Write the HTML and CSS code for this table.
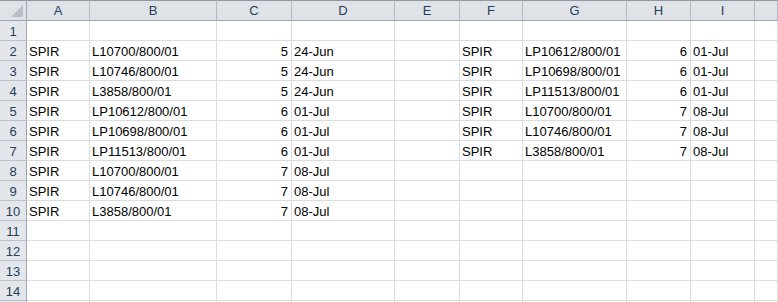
FILE: index.html
```html
<!DOCTYPE html>
<html>
<head>
<meta charset="utf-8">
<link rel="stylesheet" href="styles.css">
</head>
<body>
<div class="sheet">
  <div class="ch corner"><svg width="12" height="12" viewBox="0 0 12 12"><polygon points="12,0 12,12 0,12" fill="#b9bec5"/></svg></div>
  <div class="ch">A</div><div class="ch">B</div><div class="ch">C</div><div class="ch">D</div><div class="ch">E</div><div class="ch">F</div><div class="ch">G</div><div class="ch">H</div><div class="ch">I</div><div class="ch last"></div>

  <div class="rh">1</div><div class="c"></div><div class="c"></div><div class="c"></div><div class="c"></div><div class="c"></div><div class="c"></div><div class="c"></div><div class="c"></div><div class="c"></div><div class="c"></div>

  <div class="rh">2</div><div class="c">SPIR</div><div class="c">L10700/800/01</div><div class="c num">5</div><div class="c">24-Jun</div><div class="c"></div><div class="c">SPIR</div><div class="c">LP10612/800/01</div><div class="c num">6</div><div class="c">01-Jul</div><div class="c"></div>

  <div class="rh">3</div><div class="c">SPIR</div><div class="c">L10746/800/01</div><div class="c num">5</div><div class="c">24-Jun</div><div class="c"></div><div class="c">SPIR</div><div class="c">LP10698/800/01</div><div class="c num">6</div><div class="c">01-Jul</div><div class="c"></div>

  <div class="rh">4</div><div class="c">SPIR</div><div class="c">L3858/800/01</div><div class="c num">5</div><div class="c">24-Jun</div><div class="c"></div><div class="c">SPIR</div><div class="c">LP11513/800/01</div><div class="c num">6</div><div class="c">01-Jul</div><div class="c"></div>

  <div class="rh">5</div><div class="c">SPIR</div><div class="c">LP10612/800/01</div><div class="c num">6</div><div class="c">01-Jul</div><div class="c"></div><div class="c">SPIR</div><div class="c">L10700/800/01</div><div class="c num">7</div><div class="c">08-Jul</div><div class="c"></div>

  <div class="rh">6</div><div class="c">SPIR</div><div class="c">LP10698/800/01</div><div class="c num">6</div><div class="c">01-Jul</div><div class="c"></div><div class="c">SPIR</div><div class="c">L10746/800/01</div><div class="c num">7</div><div class="c">08-Jul</div><div class="c"></div>

  <div class="rh">7</div><div class="c">SPIR</div><div class="c">LP11513/800/01</div><div class="c num">6</div><div class="c">01-Jul</div><div class="c"></div><div class="c">SPIR</div><div class="c">L3858/800/01</div><div class="c num">7</div><div class="c">08-Jul</div><div class="c"></div>

  <div class="rh">8</div><div class="c">SPIR</div><div class="c">L10700/800/01</div><div class="c num">7</div><div class="c">08-Jul</div><div class="c"></div><div class="c"></div><div class="c"></div><div class="c"></div><div class="c"></div><div class="c"></div>

  <div class="rh">9</div><div class="c">SPIR</div><div class="c">L10746/800/01</div><div class="c num">7</div><div class="c">08-Jul</div><div class="c"></div><div class="c"></div><div class="c"></div><div class="c"></div><div class="c"></div><div class="c"></div>

  <div class="rh">10</div><div class="c">SPIR</div><div class="c">L3858/800/01</div><div class="c num">7</div><div class="c">08-Jul</div><div class="c"></div><div class="c"></div><div class="c"></div><div class="c"></div><div class="c"></div><div class="c"></div>

  <div class="rh">11</div><div class="c"></div><div class="c"></div><div class="c"></div><div class="c"></div><div class="c"></div><div class="c"></div><div class="c"></div><div class="c"></div><div class="c"></div><div class="c"></div>
  <div class="rh">12</div><div class="c"></div><div class="c"></div><div class="c"></div><div class="c"></div><div class="c"></div><div class="c"></div><div class="c"></div><div class="c"></div><div class="c"></div><div class="c"></div>
  <div class="rh">13</div><div class="c"></div><div class="c"></div><div class="c"></div><div class="c"></div><div class="c"></div><div class="c"></div><div class="c"></div><div class="c"></div><div class="c"></div><div class="c"></div>
  <div class="rh">14</div><div class="c"></div><div class="c"></div><div class="c"></div><div class="c"></div><div class="c"></div><div class="c"></div><div class="c"></div><div class="c"></div><div class="c"></div><div class="c"></div>
  <div class="rh"></div><div class="c"></div><div class="c"></div><div class="c"></div><div class="c"></div><div class="c"></div><div class="c"></div><div class="c"></div><div class="c"></div><div class="c"></div><div class="c"></div>
</div>
</body>
</html>
```

FILE: styles.css
```css
* { box-sizing: border-box; }
html, body {
  margin: 0;
  padding: 0;
  background: #ffffff;
  overflow: hidden;
}
body {
  width: 778px;
  height: 302px;
  font-family: "Liberation Sans", Arial, sans-serif;
  font-size: 13px;
  color: #000;
}
.sheet {
  display: grid;
  grid-template-columns: 27px 63px 127px 75px 103px 65px 63px 104px 64px 64px 1fr;
  grid-auto-rows: 20px;
  grid-template-rows: 21px;
  height: 302px;
  overflow: hidden;
}
.ch {
  background: #dfe3e8;
  border-top: 1px solid #8f98a3;
  border-bottom: 1px solid #9ea6b0;
  border-right: 1px solid #b3b9c1;
  color: #253e5c;
  text-align: center;
  line-height: 18px;
  padding-top: 1px;
  white-space: nowrap;
}
.ch.corner {
  display: flex;
  justify-content: flex-end;
  align-items: flex-end;
  padding: 0 3px 3px 0;
  border-right-color: #9ea6b0;
}
.ch.corner svg { display: block; }
.rh {
  background: #e3e6eb;
  border-right: 1px solid #9ea6b0;
  border-bottom: 1px solid #bcc2ca;
  color: #253e5c;
  text-align: center;
  line-height: 19px;
  padding-top: 1px;
  white-space: nowrap;
}
.c {
  border-right: 1px solid #dadcdd;
  border-bottom: 1px solid #dadcdd;
  line-height: 19px;
  padding: 1px 2px 0 2px;
  white-space: nowrap;
  overflow: hidden;
}
.c.num {
  text-align: right;
  padding-right: 3px;
}
```
